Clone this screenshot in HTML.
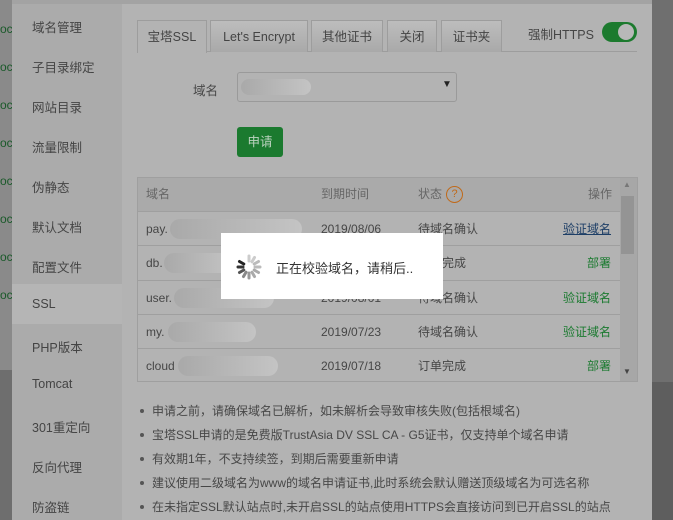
<!DOCTYPE html>
<html><head><meta charset="utf-8"><style>
*{margin:0;padding:0;box-sizing:border-box}
body{width:673px;height:520px;overflow:hidden;background:#b3b3b3;font-family:"Liberation Sans","Noto Sans CJK SC",sans-serif;font-size:12px;color:#464646;position:relative}
.a{position:absolute}
.left{left:0;top:0;width:12px;height:370px;background:#8a8a8a}
.right{left:652px;top:0;width:21px;height:520px;background:#6f6f6f}
.side{left:12px;top:4px;width:110px;height:516px;background:#ababab}
.si{position:absolute;left:20px;font-size:12.5px;color:#444}
.tab{position:absolute;top:20px;height:32px;border:1px solid #9d9d9d;border-bottom:none;background:linear-gradient(#bdbdbd,#a9a9a9);text-align:center;line-height:32px;font-size:12.5px;color:#444}
.row{position:absolute;left:138px;width:482px;border-top:1px solid #9f9f9f;height:34px;line-height:34px}
.row span{position:absolute}
.blur{position:absolute;height:20px;top:7px;border-radius:10px;background:linear-gradient(90deg,#a9a9a9,#c4c4c4)}
.g{color:#1a7a2f}
.li{position:absolute;left:152px;font-size:12px;color:#474747}
.li:before{content:"";position:absolute;left:-12px;top:7px;width:4px;height:4px;border-radius:2px;background:#555}
.lt{position:absolute;left:0;width:12px;font-size:12px;color:#1a5a2a;overflow:hidden;line-height:14px}
</style></head><body>
<div class="a left"></div>
<div class="a" style="left:0;top:370px;width:12px;height:150px;background:#6e6e6e"></div>
<div class="lt" style="top:22px">oc</div>
<div class="lt" style="top:60px">oc</div>
<div class="lt" style="top:98px">oc</div>
<div class="lt" style="top:136px">oc</div>
<div class="lt" style="top:174px">oc</div>
<div class="lt" style="top:212px">oc</div>
<div class="lt" style="top:250px">oc</div>
<div class="lt" style="top:288px">oc</div>
<div class="a right"></div>
<div class="a" style="left:652px;top:382px;width:21px;height:138px;background:#5e5e5e"></div>
<div class="a" style="left:12px;top:0;width:640px;height:4px;background:#a3a3a3"></div>
<div class="a side"></div>
<div class="a" style="left:12px;top:284px;width:110px;height:40px;background:#b5b5b5"></div>
<div class="si" style="left:32px;top:17px">域名管理</div>
<div class="si" style="left:32px;top:57px">子目录绑定</div>
<div class="si" style="left:32px;top:97px">网站目录</div>
<div class="si" style="left:32px;top:137px">流量限制</div>
<div class="si" style="left:32px;top:177px">伪静态</div>
<div class="si" style="left:32px;top:217px">默认文档</div>
<div class="si" style="left:32px;top:257px">配置文件</div>
<div class="si" style="left:32px;top:297px">SSL</div>
<div class="si" style="left:32px;top:337px">PHP版本</div>
<div class="si" style="left:32px;top:377px">Tomcat</div>
<div class="si" style="left:32px;top:417px">301重定向</div>
<div class="si" style="left:32px;top:457px">反向代理</div>
<div class="si" style="left:32px;top:497px">防盗链</div>

<div class="a" style="left:137px;top:51px;width:500px;height:1px;background:#9d9d9d"></div>
<div class="tab" style="left:137px;width:70px;background:#b3b3b3;height:33px">宝塔SSL</div>
<div class="tab" style="left:210px;width:98px">Let's Encrypt</div>
<div class="tab" style="left:311px;width:72px">其他证书</div>
<div class="tab" style="left:387px;width:50px">关闭</div>
<div class="tab" style="left:441px;width:61px">证书夹</div>
<div class="a" style="left:528px;top:24px;font-size:12.5px">强制HTTPS</div>
<div class="a" style="left:602px;top:22px;width:35px;height:20px;border-radius:10px;background:#1c7a2e"></div>
<div class="a" style="left:618px;top:24px;width:16px;height:16px;border-radius:8px;background:#b8b8b8"></div>

<div class="a" style="left:193px;top:80px;font-size:12.5px">域名</div>
<div class="a" style="left:237px;top:72px;width:220px;height:30px;border:1px solid #9a9a9a;border-radius:3px;background:#b3b3b3"></div>
<div class="blur" style="left:241px;top:79px;width:70px;height:16px"></div>
<div class="a" style="left:442px;top:79px;font-size:10px;color:#222">▼</div>
<div class="a" style="left:237px;top:127px;width:46px;height:30px;border-radius:3px;background:#1b7a2f;color:#bcd3c0;text-align:center;line-height:30px;font-size:12.5px">申请</div>

<div class="a" style="left:137px;top:177px;width:501px;height:205px;border:1px solid #9f9f9f"></div>
<div class="a" style="left:138px;top:178px;width:482px;height:33px;background:#aaaaaa;line-height:33px;color:#666">
<span class="a" style="left:8px">域名</span><span class="a" style="left:183px">到期时间</span><span class="a" style="left:280px">状态</span>
<span class="a" style="left:308px;top:8px;width:17px;height:17px;border:1.5px solid #c06a1a;border-radius:50%;color:#c06a1a;line-height:14px;text-align:center;font-size:11px">?</span>
<span class="a" style="left:450px">操作</span></div>
<div class="a" style="left:620px;top:178px;width:17px;height:203px;background:#a7a7a7"></div>
<div class="a" style="left:621px;top:196px;width:13px;height:58px;background:#949494"></div>
<div class="a" style="left:623px;top:180px;font-size:8px;color:#777">▲</div>
<div class="a" style="left:623px;top:367px;font-size:8px;color:#444">▼</div>

<div class="row" style="top:211px"><span style="left:8px">pay.</span><div class="blur" style="left:32px;width:132px"></div><span style="left:183px">2019/08/06</span><span style="left:280px">待域名确认</span><span style="left:425px;color:#1d3e66;text-decoration:underline">验证域名</span></div>
<div class="row" style="top:245px"><span style="left:8px">db.</span><div class="blur" style="left:26px;width:70px"></div><span style="left:183px">2019/08/05</span><span style="left:280px">订单完成</span><span class="g" style="left:449px">部署</span></div>
<div class="row" style="top:280px"><span style="left:8px">user.</span><div class="blur" style="left:36px;width:100px"></div><span style="left:183px">2019/08/01</span><span style="left:280px">待域名确认</span><span class="g" style="left:425px">验证域名</span></div>
<div class="row" style="top:314px"><span style="left:8px">my.</span><div class="blur" style="left:30px;width:88px"></div><span style="left:183px">2019/07/23</span><span style="left:280px">待域名确认</span><span class="g" style="left:425px">验证域名</span></div>
<div class="row" style="top:348px"><span style="left:8px">cloud</span><div class="blur" style="left:40px;width:100px"></div><span style="left:183px">2019/07/18</span><span style="left:280px">订单完成</span><span class="g" style="left:449px">部署</span></div>

<div class="a" style="left:221px;top:233px;width:222px;height:66px;background:#fff"></div>
<svg class="a" style="left:234px;top:252px" width="30" height="30" viewBox="-15 -15 30 30">
<g stroke-width="3" stroke-linecap="round">
<line x1="0" y1="-6" x2="0" y2="-11" stroke="#222" transform="rotate(-60)"/>
<line x1="0" y1="-6" x2="0" y2="-11" stroke="#333" transform="rotate(-90)"/>
<line x1="0" y1="-6" x2="0" y2="-11" stroke="#555" transform="rotate(-120)"/>
<line x1="0" y1="-6" x2="0" y2="-11" stroke="#888" transform="rotate(-150)"/>
<line x1="0" y1="-6" x2="0" y2="-11" stroke="#999" transform="rotate(180)"/>
<line x1="0" y1="-6" x2="0" y2="-11" stroke="#aaa" transform="rotate(150)"/>
<line x1="0" y1="-6" x2="0" y2="-11" stroke="#aaa" transform="rotate(120)"/>
<line x1="0" y1="-6" x2="0" y2="-11" stroke="#bbb" transform="rotate(90)"/>
<line x1="0" y1="-6" x2="0" y2="-11" stroke="#bbb" transform="rotate(60)"/>
<line x1="0" y1="-6" x2="0" y2="-11" stroke="#ccc" transform="rotate(30)"/>
<line x1="0" y1="-6" x2="0" y2="-11" stroke="#ccc" transform="rotate(0)"/>
</g></svg>
<div class="a" style="left:276px;top:258px;font-size:13px;color:#333">正在校验域名，请稍后..</div>

<div class="li" style="top:402px">申请之前，请确保域名已解析，如未解析会导致审核失败(包括根域名)</div>
<div class="li" style="top:426px">宝塔SSL申请的是免费版TrustAsia DV SSL CA - G5证书，仅支持单个域名申请</div>
<div class="li" style="top:450px">有效期1年，不支持续签，到期后需要重新申请</div>
<div class="li" style="top:474px">建议使用二级域名为www的域名申请证书,此时系统会默认赠送顶级域名为可选名称</div>
<div class="li" style="top:498px">在未指定SSL默认站点时,未开启SSL的站点使用HTTPS会直接访问到已开启SSL的站点</div>
</body></html>
